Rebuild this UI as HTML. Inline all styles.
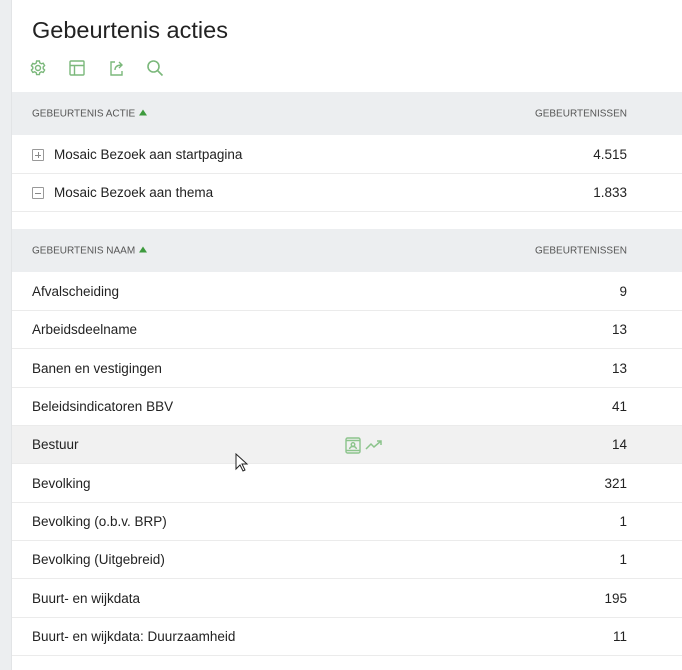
<!DOCTYPE html>
<html><head><meta charset="utf-8"><style>
*{margin:0;padding:0;box-sizing:border-box}
body{width:682px;height:670px;overflow:hidden;background:#fff;font-family:"Liberation Sans",sans-serif;color:#222;position:relative}
.strip{position:absolute;left:0;top:0;width:12px;height:670px;background:#eceef0;border-right:1px solid #e2e4e6}
h1{position:absolute;left:32px;top:17px;font-size:23.5px;font-weight:normal;color:#222}
.icons svg{position:absolute;top:59px}
.hdr{position:absolute;left:12px;width:670px;background:#eceef0;font-size:10px;color:#555}
.hdr span{position:absolute;top:50%;transform:translateY(-50%)}
.row{position:absolute;left:12px;width:670px;height:38px;border-bottom:1px solid #ebebeb;font-size:13.5px}
.row .l{position:absolute;left:20px;top:11px}
.row .r{position:absolute;right:55px;top:11px}
.tri{display:inline-block;width:0;height:0;border-left:4px solid transparent;border-right:4px solid transparent;border-bottom:6px solid #3d9a3d;margin-left:4px;vertical-align:1px}
.box{position:absolute;left:20px;top:13px;width:12px;height:12px;border:1px solid #999;border-radius:1px}
.box:before{content:"";position:absolute;left:2px;top:4.5px;width:6px;height:1px;background:#888}
.plus:after{content:"";position:absolute;left:4.5px;top:2px;width:1px;height:6px;background:#888}
</style></head><body>
<div class="strip"></div>
<h1>Gebeurtenis acties</h1>
<div class="icons">
<svg style="left:29px" width="18" height="18" viewBox="0 0 18 18" fill="none" stroke="#7bb87b" stroke-width="1.4"><circle cx="9" cy="9" r="2.5"/><path d="M7.6 2h2.8l.4 1.9 1.6.9 1.8-.6 1.4 2.4-1.4 1.3v1.8l1.4 1.3-1.4 2.4-1.8-.6-1.6.9-.4 1.9H7.6l-.4-1.9-1.6-.9-1.8.6-1.4-2.4 1.4-1.3V8.1L2.4 6.8l1.4-2.4 1.8.6 1.6-.9z"/></svg>
<svg style="left:68px" width="18" height="18" viewBox="0 0 18 18" fill="none" stroke="#7bb87b" stroke-width="1.4"><rect x="2" y="2" width="14" height="14" rx="1"/><path d="M2 6.5h14M6.5 6.5V16"/></svg>
<svg style="left:108px" width="18" height="18" viewBox="0 0 18 18" fill="none" stroke="#7bb87b" stroke-width="1.4"><path d="M7 3H3v13h11v-4"/><path d="M7 11c0-4 3-5 7-5M11 3l3 3-3 3"/></svg>
<svg style="left:146px" width="18" height="18" viewBox="0 0 18 18" fill="none" stroke="#7bb87b" stroke-width="1.6"><circle cx="7.5" cy="7.5" r="5.5"/><path d="M11.5 11.5l5 5"/></svg>
</div>
<div class="hdr" style="top:92px;height:43px"><span style="left:20px">GEBEURTENIS ACTIE<i class="tri"></i></span><span style="right:55px">GEBEURTENISSEN</span></div>
<div class="row" style="top:136px"><div class="box plus"></div><span class="l" style="left:42px">Mosaic Bezoek aan startpagina</span><span class="r">4.515</span></div>
<div class="row" style="top:174px"><div class="box"></div><span class="l" style="left:42px">Mosaic Bezoek aan thema</span><span class="r">1.833</span></div>
<div class="hdr" style="top:229px;height:43px"><span style="left:20px">GEBEURTENIS NAAM<i class="tri"></i></span><span style="right:55px">GEBEURTENISSEN</span></div>
<div class="row" style="top:273px"><span class="l">Afvalscheiding</span><span class="r">9</span></div>
<div class="row" style="top:311px"><span class="l">Arbeidsdeelname</span><span class="r">13</span></div>
<div class="row" style="top:350px"><span class="l">Banen en vestigingen</span><span class="r">13</span></div>
<div class="row" style="top:388px"><span class="l">Beleidsindicatoren BBV</span><span class="r">41</span></div>
<div class="row" style="top:426px;background:#f1f1f1"><span class="l">Bestuur</span><span class="r">14</span>
<svg style="position:absolute;left:332px;top:10px" width="18" height="19" viewBox="0 0 18 19" fill="none" stroke="#8cc48c" stroke-width="1.4"><rect x="2" y="2" width="14" height="15" rx="1.5"/><path d="M2 4.5h14M2 14.5h14"/><circle cx="9" cy="8.5" r="1.8"/><path d="M5.5 13c.5-2 2-2.5 3.5-2.5s3 .5 3.5 2.5"/></svg>
<svg style="position:absolute;left:353px;top:12px" width="20" height="14" viewBox="0 0 20 14" fill="none" stroke="#8cc48c" stroke-width="1.5"><path d="M1 11l5-5 3 3 7-6M12 3h4v4"/></svg></div>
<div class="row" style="top:465px"><span class="l">Bevolking</span><span class="r">321</span></div>
<div class="row" style="top:503px"><span class="l">Bevolking (o.b.v. BRP)</span><span class="r">1</span></div>
<div class="row" style="top:541px"><span class="l">Bevolking (Uitgebreid)</span><span class="r">1</span></div>
<div class="row" style="top:580px"><span class="l">Buurt- en wijkdata</span><span class="r">195</span></div>
<div class="row" style="top:618px"><span class="l">Buurt- en wijkdata: Duurzaamheid</span><span class="r">11</span></div>
<svg style="position:absolute;left:235px;top:453px" width="14" height="20" viewBox="0 0 14 20"><path d="M1 1v15l4-4 3 6 2-1-3-6h5z" fill="#fff" stroke="#222" stroke-width="1"/></svg>
</body></html>
